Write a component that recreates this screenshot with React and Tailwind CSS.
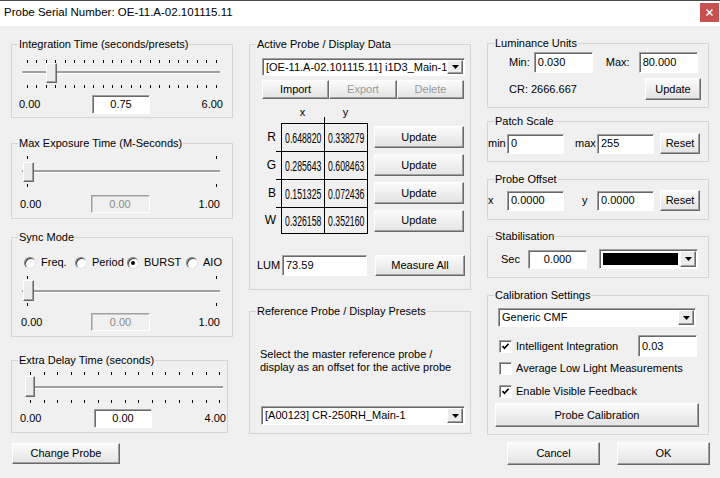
import React from "react";

const F = "font-['Liberation_Sans',Arial,sans-serif]";
const raised =
  "bg-linear-to-b from-[#fbfbfb] to-[#e3e3e3] border border-t-white border-l-white border-r-[#696969] border-b-[#696969] shadow-[inset_-1px_-1px_0_#a0a0a0]";
const sunken =
  "bg-white border border-t-[#a0a0a0] border-l-[#a0a0a0] border-r-white border-b-white shadow-[inset_1px_1px_0_#696969]";
const sunkenDis =
  "bg-[#f0f0f0] border border-t-[#a0a0a0] border-l-[#a0a0a0] border-r-white border-b-white shadow-[inset_1px_1px_0_#c8c8c8]";

function Btn({ className = "", disabled, children }) {
  return (
    <div
      className={`flex items-center justify-center shrink-0 ${raised} ${
        disabled ? "text-[#9a9a9a]" : "text-black"
      } ${className}`}
    >
      {children}
    </div>
  );
}

function Edit({ className = "", children, center, disabled }) {
  return (
    <div
      className={`flex items-center shrink-0 ${disabled ? sunkenDis + " text-[#8a8a8a]" : sunken} ${
        center ? "justify-center" : "pl-[3px]"
      } ${className}`}
    >
      {children}
    </div>
  );
}

function Arrow() {
  return (
    <svg width="7" height="4" viewBox="0 0 7 4">
      <path d="M0 0H7L3.5 4Z" fill="black" />
    </svg>
  );
}

function DropBtn() {
  return (
    <div className="w-[16px] h-full shrink-0 flex items-center justify-center bg-[#ececec] border border-t-white border-l-white border-r-[#696969] border-b-[#696969] shadow-[inset_-1px_-1px_0_#a0a0a0]">
      <Arrow />
    </div>
  );
}

function Combo({ className = "", children }) {
  return (
    <div className={`flex p-[1px] ${sunken} ${className}`}>
      <div className="flex-1 min-w-0 overflow-hidden whitespace-nowrap pl-[2px] flex items-center">
        {children}
      </div>
      <DropBtn />
    </div>
  );
}

function Group({ legend, className = "", children }) {
  return (
    <fieldset className={`min-w-0 border border-[#d5d5d5] ${className}`}>
      <legend className="ml-[6px] px-[1px] leading-[13px]">{legend}</legend>
      {children}
    </fieldset>
  );
}

function Ticks({ n, className = "" }) {
  return (
    <div className={`flex justify-between h-[3px] ${className}`}>
      {Array.from({ length: n }, (_, i) => (
        <span key={i} className="w-px h-[3px] bg-black" />
      ))}
    </div>
  );
}

function Slider({ n, wrap, ticks, mid, track, thumb }) {
  return (
    <div className={wrap}>
      <Ticks n={n} className={ticks} />
      <div className={`relative ${mid}`}>
        <div className={`absolute h-[2px] bg-[#a0a0a0] shadow-[0_1px_0_#ffffff] ${track}`} />
        <div
          className={`absolute bg-[#ececec] border border-t-white border-l-white border-r-[#696969] border-b-[#696969] shadow-[inset_-1px_-1px_0_#a0a0a0] ${thumb}`}
        />
      </div>
      <Ticks n={n} className={ticks} />
    </div>
  );
}

function Radio({ checked, label, className = "" }) {
  return (
    <div className={`flex items-center ${className}`}>
      <span className="w-[12px] h-[12px] rounded-full bg-white border border-t-[#808080] border-l-[#808080] border-r-[#e3e3e3] border-b-[#e3e3e3] shadow-[inset_1px_1px_0_#404040] flex items-center justify-center">
        {checked && <span className="w-[4px] h-[4px] rounded-full bg-black" />}
      </span>
      <span className="ml-[5px]">{label}</span>
    </div>
  );
}

function Check({ checked, label, className = "" }) {
  return (
    <div className={`flex items-center ${className}`}>
      <span className={`w-[13px] h-[13px] flex items-center justify-center ${sunken}`}>
        {checked && (
          <svg width="9" height="9" viewBox="0 0 9 9">
            <path d="M1.5 4.2L3.5 6.3L7.6 1.8" stroke="black" strokeWidth="1.7" fill="none" />
          </svg>
        )}
      </span>
      <span className="ml-[4px]">{label}</span>
    </div>
  );
}

function TitleBar() {
  return (
    <div className="h-[26px] bg-white border-t border-t-[#4a4a4a] flex justify-between">
      <div className="pl-[4px] pt-[4px] text-[11.5px] leading-[15px]">
        Probe Serial Number: OE-11.A-02.101115.11
      </div>
      <div className="mt-[2px] mr-[1px] w-[19px] h-[19px] bg-[#c75050] flex items-center justify-center">
        <svg width="7" height="7" viewBox="0 0 7 7">
          <path d="M0.5 0.5L6.5 6.5M6.5 0.5L0.5 6.5" stroke="white" strokeWidth="1.5" />
        </svg>
      </div>
    </div>
  );
}

function LeftCol() {
  return (
    <div className="w-[222px] shrink-0 flex flex-col pt-[12px]">
      <Group legend="Integration Time (seconds/presets)" className="h-[80px]">
        <Slider
          n={21}
          wrap="mt-[9px] mx-[10px]"
          ticks="px-[5px]"
          mid="h-[22px]"
          track="top-[8px] left-0 right-[2px]"
          thumb="top-0 left-[24px] w-[11px] h-[20px]"
        />
        <div className="mt-[7px] h-[19px] flex items-center justify-between pl-[7px] pr-[9px]">
          <span>0.00</span>
          <Edit center className="w-[58px] h-[19px]">0.75</Edit>
          <span>6.00</span>
        </div>
      </Group>

      <Group legend="Max Exposure Time (M-Seconds)" className="mt-[19px] h-[82px]">
        <Slider
          n={2}
          wrap="mt-[6px] mx-[10px]"
          ticks="px-[5px]"
          mid="h-[25px]"
          track="top-[11px] left-0 right-[2px]"
          thumb="top-[3px] left-[1px] w-[11px] h-[20px]"
        />
        <div className="mt-[8px] h-[18px] flex items-center justify-between pl-[8px] pr-[12px]">
          <span>0.00</span>
          <Edit center disabled className="w-[59px] h-[18px]">0.00</Edit>
          <span>1.00</span>
        </div>
      </Group>

      <Group legend="Sync Mode" className="mt-[12px] h-[106px]">
        <div className="mt-[12px] h-[13px] flex items-center pl-[12px]">
          <Radio label="Freq." className="w-[51px]" />
          <Radio label="Period" className="w-[52px]" />
          <Radio label="BURST" checked className="w-[59px]" />
          <Radio label="AIO" />
        </div>
        <Slider
          n={2}
          wrap="mt-[7px] mx-[10px]"
          ticks="px-[5px]"
          mid="h-[24px]"
          track="top-[11px] left-0 right-[2px]"
          thumb="top-[1px] left-[1px] w-[11px] h-[21px]"
        />
        <div className="mt-[7px] h-[18px] flex items-center justify-between pl-[9px] pr-[12px]">
          <span>0.00</span>
          <Edit center disabled className="w-[59px] h-[18px]">0.00</Edit>
          <span>1.00</span>
        </div>
      </Group>

      <Group legend="Extra Delay Time (seconds)" className="mt-[17px] h-[79px] w-[217px]">
        <Slider
          n={15}
          wrap="mt-[5px] ml-[13px] mr-[1px]"
          ticks="pl-[5px] pr-[6px]"
          mid="h-[25px]"
          track="top-[11px] left-0 right-[3px]"
          thumb="top-[1px] left-0 w-[10px] h-[21px]"
        />
        <div className="mt-[6px] h-[18px] flex items-center justify-between pl-[8px] pr-[1px]">
          <span>0.00</span>
          <Edit center className="w-[58px] h-[19px]">0.00</Edit>
          <span>4.00</span>
        </div>
      </Group>

      <Btn className="mt-[10px] ml-[1px] w-[108px] h-[21px]">Change Probe</Btn>
    </div>
  );
}

const rows = [
  ["R", "0.648820", "0.338279"],
  ["G", "0.285643", "0.608463"],
  ["B", "0.151325", "0.072436"],
  ["W", "0.326158", "0.352160"],
];

function Num({ children }) {
  return (
    <span className="inline-block scale-x-[0.62] text-[14px] leading-[16px] whitespace-nowrap">
      {children}
    </span>
  );
}

function MiddleCol() {
  return (
    <div className="w-[222px] shrink-0 ml-[16px] flex flex-col pt-[12px]">
      <Group legend="Active Probe / Display Data" className="h-[252px]">
        <Combo className="mt-[7px] ml-[12px] w-[203px] h-[18px]">
          [OE-11.A-02.101115.11] i1D3_Main-1
        </Combo>
        <div className="mt-[4px] ml-[12px] flex">
          <Btn className="w-[67px] h-[19px]">Import</Btn>
          <Btn disabled className="w-[68px] h-[19px]">Export</Btn>
          <Btn disabled className="w-[67px] h-[19px]">Delete</Btn>
        </div>
        <div className="ml-[12px] flex h-[24px]">
          <div className="w-[19px]" />
          <div className="w-[43px] flex justify-center pt-[7px] leading-[13px]">x</div>
          <div className="w-[43px] relative flex justify-center pt-[7px] leading-[13px]">
            y
            <span className="absolute left-0 bottom-0 w-px h-[6px] bg-black" />
          </div>
        </div>
        <div className="ml-[12px] flex flex-col">
          {rows.map(([l, x, y], i) => (
            <div key={l} className={`flex items-center ${i === 3 ? "h-[27px]" : "h-[28px]"}`}>
              <div className="w-[19px] h-full relative flex items-center justify-end pr-[5px] text-[12px]">
                {l}
                {i > 0 && <span className="absolute right-0 top-0 w-[5px] h-px bg-black" />}
              </div>
              <div
                className={`flex h-full border-l border-r border-t border-black ${
                  i === 3 ? "border-b" : ""
                }`}
              >
                <div className="w-[42px] flex items-center justify-center">
                  <Num>{x}</Num>
                </div>
                <div className="w-[43px] border-l border-black flex items-center justify-center">
                  <Num>{y}</Num>
                </div>
              </div>
              <Btn className="ml-[6px] w-[90px] h-[22px]">Update</Btn>
            </div>
          ))}
        </div>
        <div className="mt-[21px] ml-[7px] flex items-center h-[21px]">
          <span className="w-[25px]">LUM</span>
          <Edit className="w-[85px] h-[21px]">73.59</Edit>
          <Btn className="ml-[8px] w-[90px] h-[21px]">Measure All</Btn>
        </div>
      </Group>

      <Group legend="Reference Probe / Display Presets" className="mt-[15px] h-[129px]">
        <div className="mt-[30px] ml-[10px] leading-[13px]">
          Select the master reference probe /<br />
          display as an offset for the active probe
        </div>
        <Combo className="mt-[32px] ml-[11px] w-[204px] h-[19px]">[A00123] CR-250RH_Main-1</Combo>
      </Group>
    </div>
  );
}

function RightCol() {
  return (
    <div className="w-[222px] shrink-0 ml-[16px] flex flex-col pt-[11px]">
      <Group legend="Luminance Units" className="h-[71px]">
        <div className="mt-[2px] h-[21px] flex items-center pl-[21px]">
          <span>Min:</span>
          <Edit className="ml-[4px] w-[59px] h-[21px]">0.030</Edit>
          <span className="ml-[13px]">Max:</span>
          <Edit className="ml-[9px] w-[59px] h-[21px]">80.000</Edit>
        </div>
        <div className="mt-[5px] h-[22px] flex items-center justify-between pl-[21px] pr-[7px]">
          <span>CR: 2666.667</span>
          <Btn className="w-[56px] h-[22px]">Update</Btn>
        </div>
      </Group>

      <Group legend="Patch Scale" className="mt-[7px] h-[47px]">
        <div className="mt-[5px] h-[21px] flex items-center">
          <span className="w-[19px]">min</span>
          <Edit className="w-[57px] h-[20px]">0</Edit>
          <span className="ml-[11px] w-[22px]">max</span>
          <Edit className="w-[57px] h-[20px]">255</Edit>
          <Btn className="ml-[6px] w-[40px] h-[21px]">Reset</Btn>
        </div>
      </Group>

      <Group legend="Probe Offset" className="mt-[11px] h-[47px]">
        <div className="mt-[4px] h-[21px] flex items-center">
          <span className="w-[19px]">x</span>
          <Edit className="w-[57px] h-[20px]">0.0000</Edit>
          <span className="ml-[18px] w-[15px]">y</span>
          <Edit className="w-[57px] h-[20px]">0.0000</Edit>
          <Btn className="ml-[6px] w-[40px] h-[21px]">Reset</Btn>
        </div>
      </Group>

      <Group legend="Stabilisation" className="mt-[10px] h-[48px]">
        <div className="mt-[6px] h-[20px] flex items-center pl-[13px]">
          <span className="w-[27px]">Sec</span>
          <Edit center className="w-[59px] h-[19px]">0.000</Edit>
          <div className={`ml-[12px] w-[99px] h-[20px] flex p-[1px] ${sunken}`}>
            <div className="flex-1 p-[2px]">
              <div className="bg-black h-full" />
            </div>
            <DropBtn />
          </div>
        </div>
      </Group>

      <Group legend="Calibration Settings" className="mt-[11px] h-[146px]">
        <Combo className="mt-[6px] ml-[10px] w-[198px] h-[19px]">Generic CMF</Combo>
        <div className="mt-[8px] h-[22px] flex items-center pl-[11px] pr-[11px]">
          <Check checked label="Intelligent Integration" />
          <Edit className="ml-auto w-[59px] h-[22px]">0.03</Edit>
        </div>
        <div className="h-[23px] flex items-center pl-[11px]">
          <Check label="Average Low Light Measurements" />
        </div>
        <div className="h-[23px] flex items-center pl-[11px]">
          <Check checked label="Enable Visible Feedback" />
        </div>
        <Btn className="ml-[7px] w-[204px] h-[24px]">Probe Calibration</Btn>
      </Group>

      <div className="mt-[7px] flex">
        <Btn className="ml-[20px] w-[93px] h-[23px]">Cancel</Btn>
        <Btn className="ml-[17px] w-[93px] h-[23px]">OK</Btn>
      </div>
    </div>
  );
}

export default function App() {
  return (
    <div className={`w-[720px] h-[478px] overflow-hidden bg-[#f0f0f0] text-black text-[11px] leading-[13px] ${F}`}>
      <TitleBar />
      <div className="flex pl-[11px]">
        <LeftCol />
        <MiddleCol />
        <RightCol />
      </div>
    </div>
  );
}
